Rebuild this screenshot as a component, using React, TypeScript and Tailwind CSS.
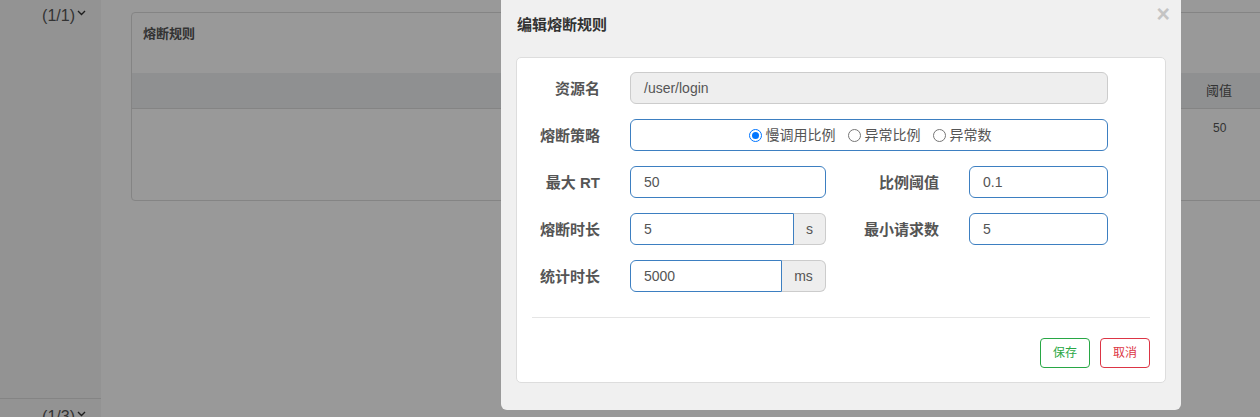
import React from "react";

const FONT = "font-['Liberation_Sans','Noto_Sans_CJK_SC',sans-serif]";

function Chevron() {
  return (
    <svg width="9" height="6" viewBox="0 0 9 6" className="ml-[2px] mb-[6px]">
      <path d="M1 1 L4.5 4.5 L8 1" fill="none" stroke="#333" strokeWidth="1.4" />
    </svg>
  );
}

function Label({ children, w }: { children: React.ReactNode; w: string }) {
  return (
    <div className={`${w} shrink-0 text-right text-[15px] font-bold text-[#555] leading-none`}>
      {children}
    </div>
  );
}

function TextInput({ value, w }: { value: string; w: string }) {
  return (
    <div
      className={`${w} h-[32px] flex items-center pl-[13px] border border-[#3d7fc1] rounded-[6px] bg-white text-[14px] text-[#555]`}
    >
      {value}
    </div>
  );
}

function AddonInput({ value, unit, iw, aw }: { value: string; unit: string; iw: string; aw: string }) {
  return (
    <div className="flex h-[32px]">
      <div
        className={`${iw} h-full flex items-center pl-[13px] border border-[#3d7fc1] rounded-l-[6px] bg-white text-[14px] text-[#555]`}
      >
        {value}
      </div>
      <div
        className={`${aw} h-full flex items-center justify-center border border-l-0 border-[#ccc] rounded-r-[6px] bg-[#eee] text-[14px] text-[#555]`}
      >
        {unit}
      </div>
    </div>
  );
}

function Radio({ label, checked }: { label: string; checked?: boolean }) {
  return (
    <label className="flex items-center gap-[4px] text-[14px] text-[#555]">
      <span
        className={`w-[13px] h-[13px] rounded-full border flex items-center justify-center ${
          checked ? "border-[#0075ff]" : "border-[#767676]"
        }`}
      >
        {checked && <span className="w-[7px] h-[7px] rounded-full bg-[#0075ff]" />}
      </span>
      {label}
    </label>
  );
}

export default function App() {
  return (
    <div className={`relative w-[1260px] h-[417px] overflow-hidden bg-white ${FONT}`}>
      {/* page */}
      <div className="flex h-full">
        <aside className="w-[101px] shrink-0 bg-[#f5f5f5] flex flex-col">
          <div className="shrink-0 flex justify-end pr-[15px] pt-[7px] h-[398px]">
            <span className="flex items-center h-[18px] text-[16px] text-[#555]">
              (1/1)
              <Chevron />
            </span>
          </div>
          <div className="shrink-0 border-t border-[#ddd] flex justify-end pr-[15px] pt-[9px]">
            <span className="flex items-center h-[18px] text-[16px] text-[#555]">
              (1/3)
              <Chevron />
            </span>
          </div>
        </aside>
        <main className="flex-1 pl-[30px] pt-[12px]">
          <div className="w-[1200px] h-[189px] border border-[#ddd] rounded-[4px] flex flex-col">
            <div className="h-[60px] pl-[11px] pt-[11px] text-[13px] font-bold text-[#555]">熔断规则</div>
            <div className="h-[36px] bg-[#eef0f2] border-b border-[#dcdcdc] flex items-center">
              <div className="ml-[1074px] text-[13px] text-[#555]">阈值</div>
            </div>
            <div className="flex pt-[10px]">
              <div className="ml-[1081px] text-[12px] text-[#555]">50</div>
            </div>
          </div>
        </main>
      </div>

      {/* backdrop */}
      <div className="absolute inset-0 bg-black/40" />

      {/* modal */}
      <div className="absolute left-[501px] top-0 w-[680px] h-[410px] bg-[#f0f0f0] rounded-b-[6px] flex flex-col">
        <div className="relative h-[57px] pl-[16px] pt-[17px]">
          <div className="text-[15px] font-bold text-[#333] leading-none">编辑熔断规则</div>
          <div className="absolute right-[11px] top-[3px] text-[23px] font-bold text-[#c4c4c4] leading-none">×</div>
        </div>
        <div className="mx-[15px] h-[326px] bg-white border border-[#ddd] rounded-[5px] flex flex-col pt-[14px]">
          <div className="flex flex-col gap-[15px]">
            <div className="flex items-center">
              <Label w="w-[83px]">资源名</Label>
              <div className="ml-[30px] w-[478px] h-[32px] flex items-center pl-[13px] border border-[#ccc] rounded-[6px] bg-[#eee] text-[14px] text-[#555]">
                /user/login
              </div>
            </div>
            <div className="flex items-center">
              <Label w="w-[83px]">熔断策略</Label>
              <div className="ml-[30px] w-[478px] h-[32px] flex items-center justify-center gap-[12px] border border-[#3d7fc1] rounded-[6px] bg-white pl-[2px]">
                <Radio label="慢调用比例" checked />
                <Radio label="异常比例" />
                <Radio label="异常数" />
              </div>
            </div>
            <div className="flex items-center">
              <Label w="w-[83px]">最大 RT</Label>
              <div className="ml-[30px]">
                <TextInput value="50" w="w-[196px]" />
              </div>
              <Label w="w-[113px]">比例阈值</Label>
              <div className="ml-[30px]">
                <TextInput value="0.1" w="w-[139px]" />
              </div>
            </div>
            <div className="flex items-center">
              <Label w="w-[83px]">熔断时长</Label>
              <div className="ml-[30px]">
                <AddonInput value="5" unit="s" iw="w-[164px]" aw="w-[32px]" />
              </div>
              <Label w="w-[113px]">最小请求数</Label>
              <div className="ml-[30px]">
                <TextInput value="5" w="w-[139px]" />
              </div>
            </div>
            <div className="flex items-center">
              <Label w="w-[83px]">统计时长</Label>
              <div className="ml-[30px]">
                <AddonInput value="5000" unit="ms" iw="w-[152px]" aw="w-[44px]" />
              </div>
            </div>
          </div>
          <div className="mx-[15px] mt-[25px] border-t border-[#e5e5e5]" />
          <div className="flex justify-end gap-[10px] mx-[15px] mt-[20px]">
            <button className="w-[50px] h-[30px] border border-[#28a745] rounded-[4px] text-[12px] text-[#28a745] bg-white">
              保存
            </button>
            <button className="w-[50px] h-[30px] border border-[#dc3545] rounded-[4px] text-[12px] text-[#dc3545] bg-white">
              取消
            </button>
          </div>
        </div>
      </div>
    </div>
  );
}
